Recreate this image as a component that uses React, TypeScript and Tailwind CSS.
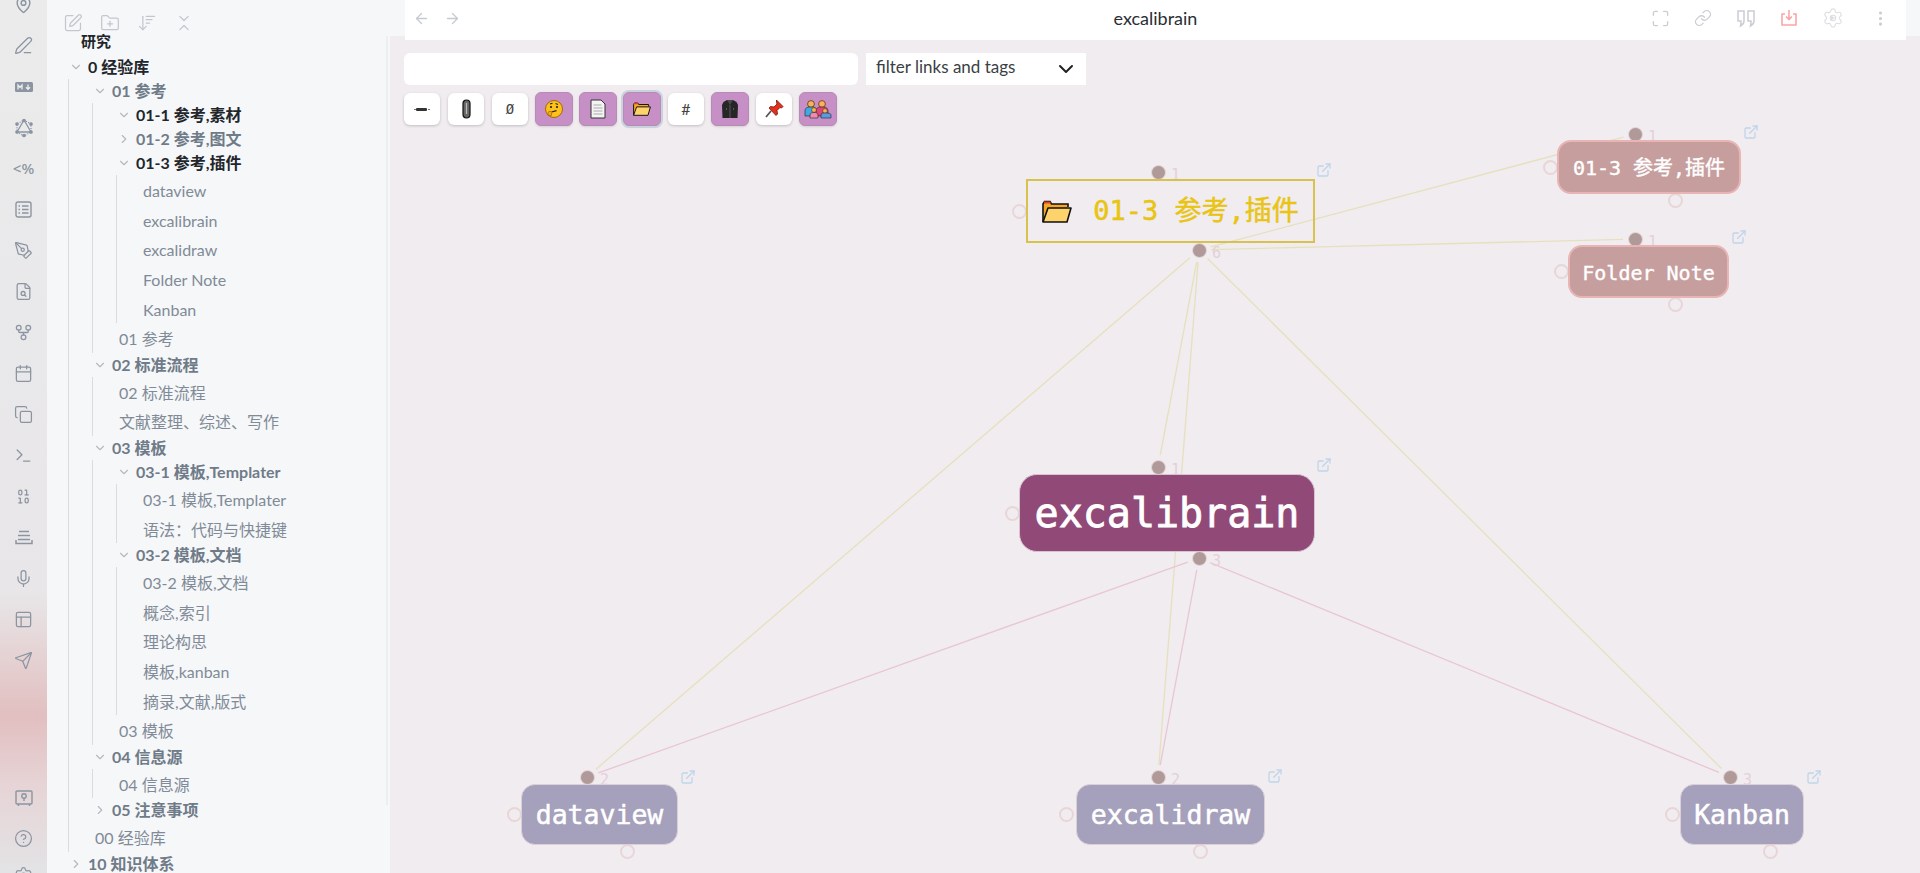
import {
  ArrowLeft,
  ArrowRight,
  ArrowDownWideNarrow,
  Binary,
  Calendar,
  ChevronDown,
  ChevronRight,
  ChevronsDownUp,
  CircleHelp,
  Copy,
  ExternalLink,
  FileSearch,
  FolderPlus,
  GitFork,
  Link,
  MapPin,
  Maximize,
  Mic,
  MoreVertical,
  PanelsTopLeft,
  PenLine,
  PenTool,
  Send,
  Settings,
  SquarePen,
  Terminal,
} from "lucide-react";
import React from "react";

const ORIGIN_X = 390;

type TreeItem = {
  name: string;
  dark?: boolean;
  closed?: boolean;
  children?: TreeItem[];
};

const tree: TreeItem[] = [
  {
    name: "0 经验库",
    dark: true,
    children: [
      {
        name: "01 参考",
        children: [
          { name: "01-1 参考,素材", dark: true, children: [] },
          { name: "01-2 参考,图文", closed: true, children: [] },
          {
            name: "01-3 参考,插件",
            dark: true,
            children: [
              { name: "dataview" },
              { name: "excalibrain" },
              { name: "excalidraw" },
              { name: "Folder Note" },
              { name: "Kanban" },
            ],
          },
          { name: "01 参考" },
        ],
      },
      {
        name: "02 标准流程",
        children: [{ name: "02 标准流程" }, { name: "文献整理、综述、写作" }],
      },
      {
        name: "03 模板",
        children: [
          {
            name: "03-1 模板,Templater",
            children: [{ name: "03-1 模板,Templater" }, { name: "语法：代码与快捷键" }],
          },
          {
            name: "03-2 模板,文档",
            children: [
              { name: "03-2 模板,文档" },
              { name: "概念,索引" },
              { name: "理论构思" },
              { name: "模板,kanban" },
              { name: "摘录,文献,版式" },
            ],
          },
          { name: "03 模板" },
        ],
      },
      {
        name: "04 信息源",
        children: [{ name: "04 信息源" }],
      },
      { name: "05 注意事项", closed: true, children: [] },
      { name: "00 经验库" },
    ],
  },
  { name: "10 知识体系", closed: true, children: [] },
];

const TreeRow = ({ item }: { item: TreeItem }) => {
  if (!item.children) {
    return (
      <div className="h-[29.6px] pl-1 pt-[3px] flex items-center text-[16px] text-[#808b97] whitespace-nowrap">
        {item.name}
      </div>
    );
  }
  const Chevron = item.closed ? ChevronRight : ChevronDown;
  return (
    <div>
      <div
        className={`h-6 flex items-center font-bold text-[16px] whitespace-nowrap ${
          item.dark ? "text-[#22262b]" : "text-[#6f7b88]"
        }`}
      >
        <Chevron className="w-[14px] h-[14px] ml-[2px] mr-[5px] text-[#b4bac2]" strokeWidth={2} />
        {item.name}
      </div>
      {!item.closed && item.children.length > 0 && (
        <div className="ml-[1px] pl-[22px] border-l border-[#d9dce0]">
          {item.children.map((child) => (
            <TreeRow key={child.name + (child.children ? "-dir" : "")} item={child} />
          ))}
        </div>
      )}
    </div>
  );
};

// ribbon icons that lucide does not have
const MdIcon = () => (
  <svg width="18" height="12" viewBox="0 0 18 12">
    <rect width="18" height="10" y="1" rx="1.5" fill="#8b95a1" />
    <path d="M3 8.500V4l2 2.500L7 4v4.500M13 3.500v4.500M11 6.200l2 2.200 2-2.200" fill="none" stroke="#eee" strokeWidth="1.3" />
  </svg>
);

const GraphIcon = () => (
  <svg width="18" height="20" viewBox="0 0 18 20" fill="none" stroke="#8b95a1" strokeWidth="1.3">
    <path d="M9 2l7 4v8l-7 4-7-4V6z" strokeDasharray="1 1.4" />
    <path d="M9 2l7 12H2z" />
    <circle cx="9" cy="2.500" r="1.200" fill="#8b95a1" />
    <circle cx="2" cy="6" r="1.200" fill="#8b95a1" />
    <circle cx="16" cy="6" r="1.200" fill="#8b95a1" />
    <circle cx="2" cy="14" r="1.200" fill="#8b95a1" />
    <circle cx="16" cy="14" r="1.200" fill="#8b95a1" />
    <circle cx="9" cy="17.500" r="1.200" fill="#8b95a1" />
  </svg>
);

const BoxListIcon = () => (
  <svg width="17" height="17" viewBox="0 0 17 17" fill="none" stroke="#8b95a1" strokeWidth="1.4">
    <rect x="1" y="1" width="15" height="15" rx="2" />
    <path d="M3.500 5h1.500M7 5h6.500M3.500 8.500h1.500M7 8.500h6.500M3.500 12h1.500M7 12h6.500" />
  </svg>
);

const TrayIcon = () => (
  <svg width="18" height="15" viewBox="0 0 18 15" fill="none" stroke="#8b95a1" strokeWidth="1.5">
    <path d="M4 1.500h10M3 5.500h12M1 10v3.500h16V10M3 9.500h12" />
  </svg>
);

const VaultIcon = () => (
  <svg width="18" height="18" viewBox="0 0 18 18" fill="none" stroke="#8b95a1" strokeWidth="1.4">
    <rect x="1" y="2" width="16" height="13" rx="1" />
    <circle cx="9" cy="7" r="2.200" />
    <path d="M9 9.200V12M3.500 15v2M14.500 15v2" />
  </svg>
);

const ribbonTop = [
  <PenLine key="pen" className="w-[19px] h-[19px]" strokeWidth={1.6} />,
  <MdIcon key="md" />,
  <GraphIcon key="graph" />,
  <span key="tpl" className="font-['Noto_Sans'] text-[15px] font-medium">{"<%"}</span>,
  <BoxListIcon key="list" />,
  <PenTool key="pentool" className="w-[19px] h-[19px]" strokeWidth={1.6} />,
  <FileSearch key="search" className="w-[19px] h-[19px]" strokeWidth={1.6} />,
  <GitFork key="fork" className="w-[19px] h-[19px]" strokeWidth={1.6} />,
  <Calendar key="cal" className="w-[19px] h-[19px]" strokeWidth={1.6} />,
  <Copy key="copy" className="w-[19px] h-[19px]" strokeWidth={1.6} />,
  <Terminal key="term" className="w-[19px] h-[19px]" strokeWidth={1.6} />,
  <Binary key="bin" className="w-[19px] h-[19px]" strokeWidth={1.6} />,
  <TrayIcon key="stack" />,
  <Mic key="mic" className="w-[19px] h-[19px]" strokeWidth={1.6} />,
  <PanelsTopLeft key="layout" className="w-[19px] h-[19px]" strokeWidth={1.6} />,
  <Send key="send" className="w-[19px] h-[19px]" strokeWidth={1.6} />,
];

// toolbar pictures, the reference shows them as colour emoji
const Face = () => (
  <svg width="20" height="20" viewBox="0 0 20 20">
    <circle cx="10" cy="10" r="8.500" fill="#fcc21b" stroke="#a56a00" strokeWidth="1" />
    <circle cx="7" cy="8" r="1.100" fill="#222" />
    <circle cx="13" cy="8" r="1.100" fill="#222" />
    <path d="M6 5l2.500-.8M11.500 4.600L14 5.500M7.500 13l5-1.400" stroke="#222" strokeWidth="1.100" fill="none" />
    <path d="M4 13.500c1-1.500 3-1.500 4 0l-1 3.500-3-1z" fill="#f5a623" stroke="#a56a00" strokeWidth="0.8" />
  </svg>
);

const Page = () => (
  <svg width="16" height="20" viewBox="0 0 16 20">
    <path d="M1 1h10l4 4v14H1z" fill="#f4f4f4" stroke="#333" strokeWidth="1" />
    <path d="M3.500 6h8M3.500 9h9M3.500 12h9M3.500 15h9" stroke="#aaa" strokeWidth="1" />
  </svg>
);

const FolderPic = ({ className }: { className: string }) => (
  <svg className={className} viewBox="0 0 30 23">
    <path d="M1 22V4l1.500-2.500H8L9.500 4H26v3" fill="#f7a823" stroke="#111" strokeWidth="1.600" />
    <path d="M2 1.500h6l1 2H2z" fill="#e0402a" />
    <path d="M6 8h23l-4 14H1z" fill="#ffd36b" stroke="#111" strokeWidth="1.600" strokeLinejoin="round" />
  </svg>
);

const Jacket = () => (
  <svg width="16" height="20" viewBox="0 0 16 20">
    <path d="M5 1h6l3.500 2L16 6l-.5 13H.5L0 6l1.500-3z" fill="#262626" />
    <path d="M8 6v13M11.500 9v2M4.500 9v2" stroke="#666" strokeWidth="0.8" />
    <path d="M5 1l3 5 3-5z" fill="#4a4a4a" />
  </svg>
);

const Pin = () => (
  <svg width="20" height="20" viewBox="0 0 20 20">
    <path d="M12.500 1l6.500 6.500-1.500 1.500-1.500-.5-3 3 .5 3.500-1.500 1.500L5 9l1.500-1.500 3.500.5 3-3-.5-1.500z" fill="#e0301e" stroke="#7a1208" strokeWidth="0.8" />
    <path d="M7 12l-5 6" stroke="#555" strokeWidth="1.800" />
  </svg>
);

const Family = () => (
  <svg width="28" height="20" viewBox="0 0 28 20">
    <circle cx="7" cy="5" r="3.400" fill="#f5b35c" stroke="#5a3200" strokeWidth="0.8" />
    <path d="M1 17v-5c0-3 2-4 6-4s6 1 6 4v5z" fill="#3fa9e0" stroke="#222" strokeWidth="0.6" />
    <circle cx="18" cy="5" r="3.400" fill="#f5b35c" stroke="#7a2a10" strokeWidth="0.8" />
    <path d="M12 17v-5c0-3 2-4 6-4s6 1 6 4v5z" fill="#e0457a" stroke="#222" strokeWidth="0.6" />
    <circle cx="10" cy="11" r="2.400" fill="#f5b35c" stroke="#5a3200" strokeWidth="0.6" />
    <path d="M6 19v-3c0-2 2-2.500 4-2.500s4 .5 4 2.500v3z" fill="#f08ab0" stroke="#222" strokeWidth="0.6" />
    <circle cx="21" cy="12" r="2.400" fill="#f5b35c" stroke="#5a3200" strokeWidth="0.6" />
    <path d="M17 19v-3c0-2 2-2 4-2s6 0 6 2v3z" fill="#5a9be0" stroke="#222" strokeWidth="0.6" />
  </svg>
);

const Dash = () => (
  <svg width="16" height="5" viewBox="0 0 16 5">
    <rect x="2" y="1" width="11" height="3" rx="1" fill="#333" />
    <rect y="2" width="2" height="1" fill="#777" />
    <rect x="14" y="2" width="2" height="1" fill="#777" />
  </svg>
);

const Clip = () => (
  <svg width="9" height="20" viewBox="0 0 9 20">
    <rect x="1" y="1" width="7" height="18" rx="3.500" fill="#666" stroke="#111" strokeWidth="1.200" />
    <path d="M4.500 4v11" stroke="#bbb" strokeWidth="1.200" />
  </svg>
);

const ToolButton = ({
  on,
  focus,
  className = "",
  children,
}: {
  on?: boolean;
  focus?: boolean;
  className?: string;
  children: React.ReactNode;
}) => (
  <div
    className={`flex items-center justify-center rounded-md ${
      on
        ? "w-[38px] h-[34px] bg-[#c690c6] border border-[#b88ab8] shadow-sm"
        : "w-[36px] h-[32px] bg-white shadow-[0_1px_3px_rgba(0,0,0,0.2)]"
    } ${focus ? "ring-2 ring-[#c9d3de]" : ""} ${className}`}
  >
    {children}
  </div>
);

// edges between the brain nodes, page coordinates
const edges = [
  { x1: 1199, y1: 250, x2: 587, y2: 777, color: "#e6e0bd" },
  { x1: 1199, y1: 250, x2: 1158, y2: 777, color: "#e6e0bd" },
  { x1: 1199, y1: 250, x2: 1730, y2: 777, color: "#e6e0bd" },
  { x1: 1199, y1: 250, x2: 1158, y2: 467, color: "#e6e0bd" },
  { x1: 1199, y1: 250, x2: 1635, y2: 134, color: "#e6e0bd" },
  { x1: 1199, y1: 250, x2: 1635, y2: 239, color: "#e6e0bd" },
  { x1: 1199, y1: 558, x2: 587, y2: 777, color: "#e9c6d4" },
  { x1: 1199, y1: 558, x2: 1158, y2: 777, color: "#e9c6d4" },
  { x1: 1199, y1: 558, x2: 1730, y2: 777, color: "#e9c6d4" },
];

const trimEdge = (e: (typeof edges)[number]) => {
  const len = Math.hypot(e.x2 - e.x1, e.y2 - e.y1);
  const ux = (e.x2 - e.x1) / len;
  const uy = (e.y2 - e.y1) / len;
  return {
    x1: e.x1 + ux * 12 - ORIGIN_X,
    y1: e.y1 + uy * 12,
    x2: e.x2 - ux * 12 - ORIGIN_X,
    y2: e.y2 - uy * 12,
  };
};

const Dot = ({ x, y, filled }: { x: number; y: number; filled?: boolean }) => (
  <div
    className={`absolute w-[15px] h-[15px] rounded-full ${
      filled ? "bg-[#b09999] border border-[#ead9d9]" : "border-2 border-[#e8d6d6]"
    }`}
    style={{ left: x - ORIGIN_X - 7.5, top: y - 7.5 }}
  />
);

type BrainNode = {
  x: number;
  y: number;
  w: number;
  h: number;
  label: React.ReactNode;
  className: string;
  top: [number, number];
  count: string;
  left: [number, number];
  bottom: [number, number];
  link: [number, number];
};

const nodes: BrainNode[] = [
  {
    x: 1026,
    y: 179,
    w: 289,
    h: 64,
    className: "border-2 border-[#d8c24e] text-[#e9c413] text-[27px] [-webkit-text-stroke:0.5px_#e9c413]",
    label: (
      <>
        <FolderPic className="w-[30px] h-[23px] mr-[21px]" />
        01-3 参考,插件
      </>
    ),
    top: [1158, 172],
    count: "1",
    left: [1019, 211],
    bottom: [1199, 250],
    link: [1324, 170],
  },
  {
    x: 1557,
    y: 140,
    w: 184,
    h: 54,
    className: "pt-[2px] rounded-[14px] bg-[#c69e9e] border-2 border-[#e8b4b4] text-white text-[20px] [-webkit-text-stroke:0.4px_#ffffff]",
    label: "01-3 参考,插件",
    top: [1635, 134],
    count: "1",
    left: [1550, 167],
    bottom: [1675, 200],
    link: [1751, 132],
  },
  {
    x: 1568,
    y: 245,
    w: 161,
    h: 53,
    className: "pt-[2px] rounded-[14px] bg-[#c69e9e] border-2 border-[#e8b4b4] text-white text-[20px] [-webkit-text-stroke:0.4px_#ffffff]",
    label: "Folder Note",
    top: [1635, 239],
    count: "1",
    left: [1561, 271],
    bottom: [1675, 304],
    link: [1739, 237],
  },
  {
    x: 1019,
    y: 474,
    w: 296,
    h: 78,
    className: "rounded-[18px] bg-[#914a77] border border-[#d8c4d0] text-white text-[40px] [-webkit-text-stroke:0.8px_#ffffff]",
    label: "excalibrain",
    top: [1158, 467],
    count: "1",
    left: [1012, 513],
    bottom: [1199, 558],
    link: [1324, 465],
  },
  {
    x: 521,
    y: 784,
    w: 157,
    h: 61,
    className: "rounded-[14px] bg-[#a5a0bc] border border-[#dccfd8] text-white text-[26.5px] [-webkit-text-stroke:0.5px_#ffffff]",
    label: "dataview",
    top: [587, 777],
    count: "2",
    left: [514, 814],
    bottom: [627, 851],
    link: [688, 777],
  },
  {
    x: 1076,
    y: 784,
    w: 189,
    h: 61,
    className: "rounded-[14px] bg-[#a5a0bc] border border-[#dccfd8] text-white text-[26.5px] [-webkit-text-stroke:0.5px_#ffffff]",
    label: "excalidraw",
    top: [1158, 777],
    count: "2",
    left: [1066, 814],
    bottom: [1200, 851],
    link: [1275, 776],
  },
  {
    x: 1680,
    y: 784,
    w: 124,
    h: 61,
    className: "rounded-[14px] bg-[#a5a0bc] border border-[#dccfd8] text-white text-[26.5px] [-webkit-text-stroke:0.5px_#ffffff]",
    label: "Kanban",
    top: [1730, 777],
    count: "3",
    left: [1672, 814],
    bottom: [1770, 851],
    link: [1814, 777],
  },
];

const App: React.FC = () => {
  return (
    <div className="w-[1920px] h-[873px] flex overflow-hidden bg-[#f0ecf0] font-['Lato','Noto_Sans_CJK_SC',sans-serif]">
      {/* ribbon */}
      <div className="relative w-[47px] shrink-0 overflow-hidden text-[#8b95a1] bg-[linear-gradient(180deg,#ebebec_0%,#e8e6e8_68%,#e2bfc0_82%,#e6d4d6_90%,#e3e3e5_100%)]">
        <div className="h-[14px] flex items-end justify-center">
          <MapPin className="w-[19px] h-[19px] shrink-0" strokeWidth={1.8} />
        </div>
        <div className="mt-[11px] flex flex-col">
          {ribbonTop.map((icon, i) => (
            <div key={i} className="h-[41px] flex items-center justify-center">
              {icon}
            </div>
          ))}
        </div>
        <div className="absolute left-0 right-0 top-[777px] flex flex-col">
          <div className="h-[41px] flex items-center justify-center">
            <VaultIcon />
          </div>
          <div className="h-[41px] flex items-center justify-center">
            <CircleHelp className="w-[19px] h-[19px]" strokeWidth={1.6} />
          </div>
          <div className="h-[41px] flex items-center justify-center -mt-[4px]">
            <Settings className="w-[19px] h-[19px]" strokeWidth={1.6} />
          </div>
        </div>
      </div>

      {/* file tree */}
      <div className="relative w-[343px] shrink-0 bg-[#f6f7f9] overflow-hidden">
        <div className="h-[30px] pt-[13px] pl-[16px] flex gap-[17px] text-[#c2c7ce]">
          <SquarePen className="w-[20px] h-[20px] shrink-0" strokeWidth={1.5} />
          <FolderPlus className="w-[20px] h-[20px] shrink-0" strokeWidth={1.5} />
          <ArrowDownWideNarrow className="w-[20px] h-[20px] shrink-0" strokeWidth={1.5} />
          <ChevronsDownUp className="w-[20px] h-[20px] shrink-0" strokeWidth={1.5} />
        </div>
        <div className="h-[24px] pl-[34px] pb-[1px] flex items-center font-bold text-[15px] text-[#22262b]">研究</div>
        <div className="pl-[20px] pt-[1px]">
          {tree.map((item) => (
            <TreeRow key={item.name} item={item} />
          ))}
        </div>
        <div className="absolute left-[339px] top-[36px] w-[2px] h-[769px] bg-[#eceef0]" />
      </div>

      {/* main view */}
      <div className="relative flex-1 min-w-0">
        <div className="h-[36px] flex bg-[#f6f7f9]">
          <div className="flex-1 ml-[15px] mr-[14px] h-[40px] pb-[4px] bg-white relative flex items-center">
            <ArrowLeft className="ml-[8px] w-[17px] h-[17px] text-[#c6cad0]" strokeWidth={1.8} />
            <ArrowRight className="ml-[14px] w-[17px] h-[17px] text-[#c6cad0]" strokeWidth={1.8} />
            <div className="absolute left-0 right-0 top-[5px] text-center text-[18px] text-[#2a2e33]">excalibrain</div>
            <div className="ml-auto mr-[16px] flex items-center gap-[24px] text-[#cacdd3]">
              <Maximize className="w-[19px] h-[19px]" strokeWidth={1.7} />
              <Link className="w-[18px] h-[18px]" strokeWidth={1.7} />
              <svg width="20" height="19" viewBox="0 0 20 19" fill="none" stroke="currentColor" strokeWidth="1.5">
                <path d="M2 2h6v10c0 3-1.500 4-3.500 5 .5-2 .5-3 .5-5H2zM12 2h6v10c0 3-1.500 4-3.500 5 .5-2 .5-3 .5-5h-3z" />
              </svg>
              <svg width="18" height="18" viewBox="0 0 18 18" fill="none" stroke="#fca5a5" strokeWidth="1.600">
                <path d="M5 5H2v11h14V5h-3M9 1v9M6 7.500l3 3 3-3" />
              </svg>
              <div className="relative flex items-center justify-center">
                <Settings className="w-[22px] h-[22px] text-[#dcdee2]" strokeWidth={1.2} />
                <svg className="absolute" width="6" height="6" viewBox="0 0 6 6">
                  <path d="M1 0.500l4 2.500-4 2.500z" fill="#dcdee2" />
                </svg>
              </div>
              <MoreVertical className="w-[19px] h-[19px] ml-[3px]" strokeWidth={2} />
            </div>
          </div>
        </div>

        <div className="pt-[17px] pl-[14px]">
          <div className="flex gap-2">
            <div className="w-[454px] h-8 bg-white rounded-md" />
            <div className="w-[220px] h-8 bg-white flex items-center justify-between pl-[10px] pr-[8px] text-[17px] text-[#3a3f45]">
              <span className="pb-[4px]">filter links and tags</span>
              <ChevronDown className="w-6 h-6 text-[#222]" strokeWidth={2} />
            </div>
          </div>
          <div className="mt-[7px] flex items-center gap-[7px] h-[34px]">
            <ToolButton><Dash /></ToolButton>
            <ToolButton className="ml-px"><Clip /></ToolButton>
            <ToolButton className="ml-px"><span className="text-[14px] text-[#444] font-['DejaVu_Sans_Mono']">Ø</span></ToolButton>
            <ToolButton on><Face /></ToolButton>
            <ToolButton on className="-ml-px"><Page /></ToolButton>
            <ToolButton on focus className="-ml-px"><FolderPic className="w-[18px] h-[14px]" /></ToolButton>
            <ToolButton><span className="text-[16px] text-[#444]">#</span></ToolButton>
            <ToolButton on><Jacket /></ToolButton>
            <ToolButton><Pin /></ToolButton>
            <ToolButton on><Family /></ToolButton>
          </div>
        </div>

        {/* graph canvas */}
        <svg className="absolute left-0 top-0 pointer-events-none" width="1530" height="873">
          {edges.map((e, i) => {
            const t = trimEdge(e);
            return <line key={i} x1={t.x1} y1={t.y1} x2={t.x2} y2={t.y2} stroke={e.color} strokeWidth="1.3" />;
          })}
        </svg>
        {nodes.map((n, i) => (
          <React.Fragment key={i}>
            <Dot x={n.top[0]} y={n.top[1]} filled />
            <div
              className="absolute text-[15px] leading-none text-[#e5d0d8] font-['DejaVu_Sans_Mono']"
              style={{ left: n.top[0] - ORIGIN_X + 13, top: n.top[1] - 4 }}
            >
              {n.count}
            </div>
            <Dot x={n.left[0]} y={n.left[1]} />
            <Dot x={n.bottom[0]} y={n.bottom[1]} filled={i === 0 || i === 3} />
            {(i === 0 || i === 3) && (
              <div
                className="absolute text-[15px] leading-none text-[#e5d0d8] font-['DejaVu_Sans_Mono']"
                style={{ left: n.bottom[0] - ORIGIN_X + 13, top: n.bottom[1] - 4 }}
              >
                {i === 0 ? "6" : "3"}
              </div>
            )}
            <ExternalLink
              className="absolute w-[16px] h-[16px] text-[#bfd5ea]"
              strokeWidth={2}
              style={{ left: n.link[0] - ORIGIN_X - 8, top: n.link[1] - 8 }}
            />
            <div
              className={`absolute flex items-center justify-center whitespace-nowrap font-['DejaVu_Sans_Mono','Noto_Sans_CJK_SC',monospace] ${n.className}`}
              style={{ left: n.x - ORIGIN_X, top: n.y, width: n.w, height: n.h }}
            >
              {n.label}
            </div>
          </React.Fragment>
        ))}
      </div>
    </div>
  );
};

export default App;
